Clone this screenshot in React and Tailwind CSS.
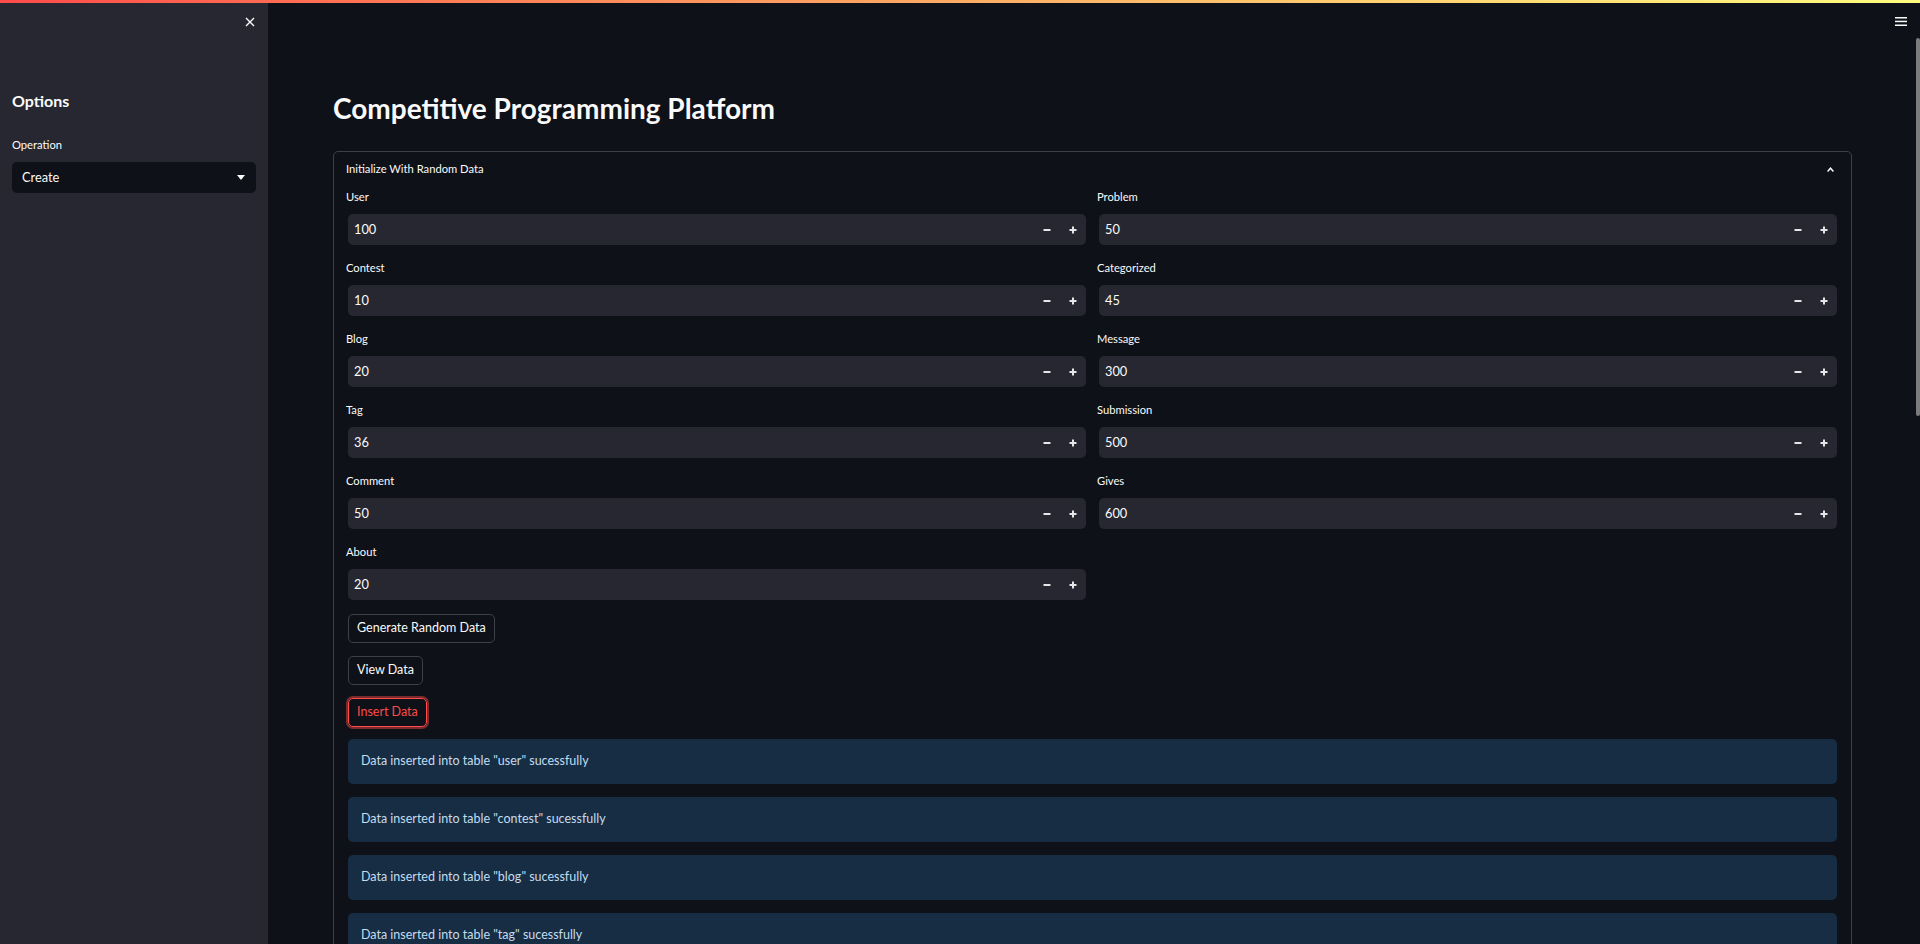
import React from 'react';

const fields = [
  ['User', '100'],
  ['Problem', '50'],
  ['Contest', '10'],
  ['Categorized', '45'],
  ['Blog', '20'],
  ['Message', '300'],
  ['Tag', '36'],
  ['Submission', '500'],
  ['Comment', '50'],
  ['Gives', '600'],
  ['About', '20'],
];

const tables = ['user', 'contest', 'blog', 'tag'];

const NumberInput = ({ label, value }) => (
  <div className="flex flex-col">
    <div className="h-[22px] flex items-center text-[11.2px] text-[#fafafa] -ml-[2px]">{label}</div>
    <div className="mt-[6px] h-[31px] rounded-[5px] bg-[#262730] flex items-center justify-between pl-[6px]">
      <span className="text-[12.8px] text-[#fafafa]">{value}</span>
      <div className="flex h-full">
        <div className="w-[26px] h-full flex items-center justify-center">
          <svg width="8" height="8" viewBox="0 0 8 8">
            <rect x="0.5" y="3" width="7" height="2" fill="#e6e6e8" />
          </svg>
        </div>
        <div className="w-[26px] h-full flex items-center justify-center">
          <svg width="8" height="8" viewBox="0 0 8 8">
            <rect x="0.5" y="3" width="7" height="2" fill="#e6e6e8" />
            <rect x="3" y="0.5" width="2" height="7" fill="#e6e6e8" />
          </svg>
        </div>
      </div>
    </div>
  </div>
);

const Button = ({ children, danger }) => (
  <button
    className={
      danger
        ? 'h-[29px] px-[8px] rounded-[5px] border border-[#ff4b4b] text-[#ff4b4b] text-[12.5px] shadow-[0_0_0_2px_rgba(255,75,75,0.45)] bg-transparent'
        : 'h-[29px] px-[8px] rounded-[5px] border border-[#3d4046] text-[#fafafa] text-[12.5px] bg-transparent'
    }
  >
    {children}
  </button>
);

export default function App() {
  return (
    <div className="relative flex h-[944px] w-full overflow-hidden bg-[#0e1117] text-[#fafafa] font-['Lato','Noto_Sans',sans-serif]">
      <div className="absolute top-0 left-0 right-0 h-[3px] bg-linear-to-r from-[#ff4b4b] to-[#fffd80] z-10" />

      {/* sidebar */}
      <aside className="w-[268px] shrink-0 bg-[#262730] px-[12px]">
        <div className="flex justify-end pt-[17px] pr-[1px]">
          <svg width="10" height="10" viewBox="0 0 10 10" stroke="#fafafa" strokeWidth="1.4">
            <path d="M1 1 L9 9 M9 1 L1 9" />
          </svg>
        </div>
        <h2 className="mt-[64px] text-[16px] leading-[20px] font-bold">Options</h2>
        <div className="mt-[27px] text-[11.2px] leading-[14px]">Operation</div>
        <div className="mt-[10px] h-[31px] rounded-[5px] bg-[#0e1117] flex items-center justify-between pl-[10px] pr-[11px]">
          <span className="text-[12.8px]">Create</span>
          <svg width="8" height="5" viewBox="0 0 8 5">
            <path d="M0 0 H8 L4 5 Z" fill="#fafafa" />
          </svg>
        </div>
      </aside>

      {/* main */}
      <main className="relative flex-1 pl-[65px] pr-[68px]">
        <div className="absolute right-[13px] top-[17px]">
          <svg width="12" height="9" viewBox="0 0 12 9" fill="#fafafa">
            <rect x="0" y="0" width="12" height="1.5" />
            <rect x="0" y="3.7" width="12" height="1.5" />
            <rect x="0" y="7.5" width="12" height="1.5" />
          </svg>
        </div>
        <div className="absolute right-0 top-[38px] w-[4px] h-[378px] rounded-[2px] bg-[#7b7b7d]" />

        <h1 className="mt-[88px] text-[28px] leading-[40px] font-bold">Competitive Programming Platform</h1>

        <div className="mt-[23px] border border-[#3d4046] rounded-[5px]">
          <div className="h-[34px] flex items-center justify-between pl-[12px] pr-[17px]">
            <span className="text-[11.2px]">Initialize With Random Data</span>
            <svg width="7" height="5" viewBox="0 0 7 5" stroke="#fafafa" strokeWidth="1.5" fill="none">
              <path d="M0.6 4.4 L3.5 1.2 L6.4 4.4" />
            </svg>
          </div>
          <div className="px-[14px] pb-[20px]">
            <div className="grid grid-cols-2 gap-x-[13px] gap-y-[12px]">
              {fields.map(([label, value]) => (
                <NumberInput key={label} label={label} value={value} />
              ))}
            </div>
            <div className="mt-[14px] flex flex-col items-start gap-[13px]">
              <Button>Generate Random Data</Button>
              <Button>View Data</Button>
              <Button danger>Insert Data</Button>
            </div>
            <div className="mt-[12px] flex flex-col gap-[13px]">
              {tables.map((t) => (
                <div key={t} className="h-[45px] rounded-[5px] bg-[#172d43] flex items-center px-[13px] text-[12.5px] text-[#c4dcef]">
                  Data inserted into table "{t}" sucessfully
                </div>
              ))}
            </div>
          </div>
        </div>
      </main>
    </div>
  );
}
